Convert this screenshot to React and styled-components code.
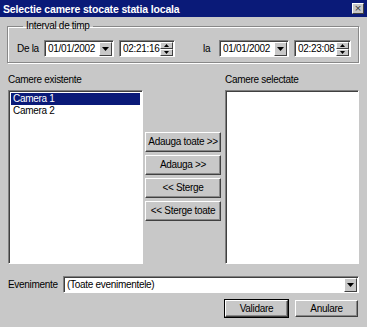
import styled, { createGlobalStyle } from "styled-components";

const GlobalStyle = createGlobalStyle`
  html, body {
    margin: 0;
    padding: 0;
    background: #c8c8c8;
  }
  body {
    font-family: "Liberation Sans", Arial, sans-serif;
    font-size: 10px;
    letter-spacing: -0.3px;
    color: #000;
  }
  * {
    box-sizing: border-box;
  }
`;

const Window = styled.div`
  width: 367px;
  height: 327px;
  background: #c8c8c8;
  display: flex;
  flex-direction: column;
  overflow: hidden;
`;

const TitleBar = styled.div`
  height: 17px;
  flex: none;
  background: #0a1a78;
  color: #fff;
  display: flex;
  align-items: center;
  justify-content: space-between;
  padding: 0 3px 0 3px;
  font-weight: bold;
  font-size: 10.5px;
  letter-spacing: -0.15px;
`;

const CloseBox = styled.div`
  width: 12px;
  height: 11px;
  background: #c8c8c8;
  border: 1px solid;
  border-color: #fff #404040 #404040 #fff;
  display: flex;
  align-items: center;
  justify-content: center;
  color: #333;
  font-family: "DejaVu Sans", sans-serif;
  font-weight: normal;
  font-size: 9px;
  letter-spacing: 0;
  line-height: 1;
`;

const Content = styled.div`
  padding: 3px 8px 0 7px;
  display: flex;
  flex-direction: column;
`;

const Group = styled.fieldset`
  margin: 0;
  padding: 8px 8px 5px 9px;
  border: 1px solid #888;
  box-shadow: inset 1px 1px 0 #fff, 1px 1px 0 #fff;
  min-width: 0;
`;

const Legend = styled.legend`
  margin-left: 6px;
  padding: 0 3px;
  line-height: 12px;
`;

const TimeRow = styled.div`
  display: flex;
  align-items: center;
  height: 17px;
`;

const RowLabel = styled.span`
  width: ${(p) => p.$w}px;
  flex: none;
  white-space: nowrap;
`;

const Sunken = styled.div`
  background: #fff;
  border: 1px solid;
  border-color: #808080 #fff #fff #808080;
  box-shadow: inset 1px 1px 0 #404040;
`;

const Field = styled(Sunken)`
  width: ${(p) => p.$w}px;
  height: 17px;
  flex: none;
  display: flex;
  align-items: stretch;
  margin-right: ${(p) => p.$mr || 0}px;
  padding: 1px 1px 0 3px;
`;

const FieldText = styled.span`
  flex: 1;
  line-height: 14px;
  white-space: nowrap;
  overflow: hidden;
`;

const ArrowBtn = styled.div`
  width: 13px;
  flex: none;
  height: 14px;
  background: #c8c8c8;
  border: 1px solid;
  border-color: #fff #404040 #404040 #fff;
  display: flex;
  align-items: center;
  justify-content: center;
`;

const Spinner = styled.div`
  width: 13px;
  height: 14px;
  flex: none;
  display: flex;
  flex-direction: column;
`;

const SpinHalf = styled.div`
  flex: 1;
  background: #c8c8c8;
  border: 1px solid;
  border-color: #fff #404040 #404040 #fff;
  display: flex;
  align-items: center;
  justify-content: center;
`;

const Columns = styled.div`
  display: flex;
  margin-top: 11px;
  padding-left: 1px;
`;

const ListColumn = styled.div`
  width: ${(p) => p.$w}px;
  flex: none;
  display: flex;
  flex-direction: column;
`;

const SectionLabel = styled.div`
  line-height: 12px;
  height: 12px;
  margin-bottom: 4px;
`;

const ListBox = styled(Sunken)`
  height: 174px;
  padding: 2px;
`;

const ListItem = styled.div`
  height: 12px;
  line-height: 12px;
  padding-left: 2px;
  background: ${(p) => (p.$selected ? "#0a1a78" : "transparent")};
  color: ${(p) => (p.$selected ? "#fff" : "#000")};
`;

const ButtonColumn = styled.div`
  width: 82px;
  flex: none;
  display: flex;
  flex-direction: column;
  gap: 3px;
  padding: 58px 4px 0 2px;
`;

const Button = styled.button`
  font: inherit;
  letter-spacing: inherit;
  color: #000;
  white-space: nowrap;
  height: ${(p) => p.$h || 20}px;
  width: ${(p) => (p.$w ? `${p.$w}px` : "100%")};
  padding: 0;
  background: #c8c8c8;
  border: 1px solid;
  border-color: #fff #404040 #404040 #fff;
  box-shadow: inset -1px -1px 0 #888;
  outline: ${(p) => (p.$default ? "1px solid #000" : "none")};
  outline-offset: 0;
  line-height: 1;
`;

const EventRow = styled.div`
  display: flex;
  align-items: center;
  margin-top: 12px;
  padding-left: 1px;
`;

const Footer = styled.div`
  display: flex;
  justify-content: flex-end;
  gap: 7px;
  margin-top: 7px;
  padding-right: 1px;
`;

function DownArrow() {
  return (
    <svg width="7" height="4" viewBox="0 0 7 4">
      <path d="M0 0h7L3.5 4z" fill="#000" />
    </svg>
  );
}

function UpArrow() {
  return (
    <svg width="5" height="3" viewBox="0 0 5 3">
      <path d="M0 3h5L2.5 0z" fill="#000" />
    </svg>
  );
}

function SmallDown() {
  return (
    <svg width="5" height="3" viewBox="0 0 5 3">
      <path d="M0 0h5L2.5 3z" fill="#000" />
    </svg>
  );
}

function DateBox({ value, mr }) {
  return (
    <Field $w={70} $mr={mr}>
      <FieldText>{value}</FieldText>
      <ArrowBtn>
        <DownArrow />
      </ArrowBtn>
    </Field>
  );
}

function TimeBox({ value, w }) {
  return (
    <Field $w={w}>
      <FieldText>{value}</FieldText>
      <Spinner>
        <SpinHalf>
          <UpArrow />
        </SpinHalf>
        <SpinHalf>
          <SmallDown />
        </SpinHalf>
      </Spinner>
    </Field>
  );
}

export default function App() {
  return (
    <>
      <GlobalStyle />
      <Window>
        <TitleBar>
          <span>Selectie camere stocate statia locala</span>
          <CloseBox>×</CloseBox>
        </TitleBar>
        <Content>
          <Group>
            <Legend>Interval de timp</Legend>
            <TimeRow>
              <RowLabel $w={27}>De la</RowLabel>
              <DateBox value="01/01/2002" mr={5} />
              <TimeBox value="02:21:16" w={56} />
              <RowLabel $w={28} />
              <RowLabel $w={16}>la</RowLabel>
              <DateBox value="01/01/2002" mr={5} />
              <TimeBox value="02:23:08" w={57} />
            </TimeRow>
          </Group>

          <Columns>
            <ListColumn $w={135}>
              <SectionLabel>Camere existente</SectionLabel>
              <ListBox>
                <ListItem $selected>Camera 1</ListItem>
                <ListItem>Camera 2</ListItem>
              </ListBox>
            </ListColumn>
            <ButtonColumn>
              <Button>Adauga toate &gt;&gt;</Button>
              <Button>Adauga &gt;&gt;</Button>
              <Button>&lt;&lt; Sterge</Button>
              <Button>&lt;&lt; Sterge toate</Button>
            </ButtonColumn>
            <ListColumn $w={134}>
              <SectionLabel>Camere selectate</SectionLabel>
              <ListBox />
            </ListColumn>
          </Columns>

          <EventRow>
            <RowLabel $w={55}>Evenimente</RowLabel>
            <Field $w={296}>
              <FieldText>(Toate evenimentele)</FieldText>
              <ArrowBtn>
                <DownArrow />
              </ArrowBtn>
            </Field>
          </EventRow>

          <Footer>
            <Button $w={63} $h={17} $default>
              Validare
            </Button>
            <Button $w={63} $h={17}>
              Anulare
            </Button>
          </Footer>
        </Content>
      </Window>
    </>
  );
}
